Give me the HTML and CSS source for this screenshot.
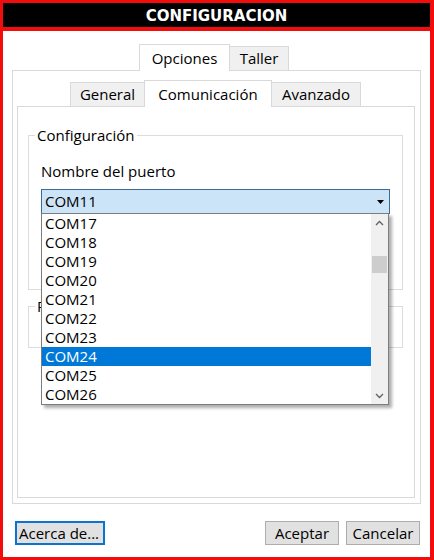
FILE: index.html
```html
<!DOCTYPE html>
<html lang="es">
<head>
<meta charset="utf-8">
<title>CONFIGURACION</title>
<link rel="stylesheet" href="styles.css">
</head>
<body>
<div class="window">
  <div class="titlebar">CONFIGURACION</div>
  <div class="client">
    <div class="strip outer-strip">
      <div class="tab sel w-opciones">Opciones</div>
      <div class="tab w-taller">Taller</div>
    </div>
    <div class="pane outer-pane">
      <div class="strip inner-strip">
        <div class="tab w-general">General</div>
        <div class="tab sel w-comunicacion">Comunicación</div>
        <div class="tab w-avanzado">Avanzado</div>
      </div>
      <div class="pane inner-pane">
        <div class="group group-config">
          <span class="legend">Configuración</span>
          <div class="label">Nombre del puerto</div>
          <div class="combo-wrap">
            <div class="combo">
              <span class="combo-value">COM11</span>
              <svg class="combo-arrow" width="7" height="4" viewBox="0 0 7 4"><path d="M0 0H7L3.5 4Z" fill="#000"/></svg>
            </div>
            <div class="droplist">
              <div class="items">
                <div class="item">COM17</div>
                <div class="item">COM18</div>
                <div class="item">COM19</div>
                <div class="item">COM20</div>
                <div class="item">COM21</div>
                <div class="item">COM22</div>
                <div class="item">COM23</div>
                <div class="item selected">COM24</div>
                <div class="item">COM25</div>
                <div class="item">COM26</div>
              </div>
              <div class="scrollbar">
                <div class="sb-arrow">
                  <svg width="9" height="6" viewBox="0 0 9 6"><path d="M1 5L4.5 1.5L8 5" fill="none" stroke="#606060" stroke-width="1.3"/></svg>
                </div>
                <div class="sb-track">
                  <div class="sb-thumb"></div>
                </div>
                <div class="sb-arrow">
                  <svg width="9" height="6" viewBox="0 0 9 6"><path d="M1 1L4.5 4.5L8 1" fill="none" stroke="#606060" stroke-width="1.3"/></svg>
                </div>
              </div>
            </div>
          </div>
        </div>
        <div class="group group-second">
          <span class="legend">Parámetros</span>
        </div>
      </div>
    </div>
    <div class="buttons">
      <button class="btn btn-focus w-acerca">Acerca de...</button>
      <div class="spacer"></div>
      <button class="btn w-btn">Aceptar</button>
      <button class="btn w-btn">Cancelar</button>
    </div>
  </div>
</div>
</body>
</html>
```
FILE: styles.css
```css
* { box-sizing: border-box; }
html, body { margin: 0; padding: 0; }
body {
  width: 434px;
  height: 560px;
  overflow: hidden;
  background: #f20c0c;
  font-family: "Open Sans", "Noto Sans", sans-serif;
  font-size: 15px;
  line-height: 20px;
  color: #000;
}
.window {
  display: flex;
  flex-direction: column;
  height: 560px;
  padding: 3px 4px 3px 3px;
}
.titlebar {
  height: 24px;
  flex: none;
  background: #000;
  color: #fff;
  font-family: "DejaVu Sans", sans-serif;
  font-weight: bold;
  font-size: 15px;
  line-height: 22px;
  padding-top: 2px;
  text-align: center;
  margin-bottom: 4px;
}
.client {
  flex: 1;
  background: #fff;
  display: flex;
  flex-direction: column;
  padding: 13px 9px 0;
}
.strip {
  display: flex;
  align-items: flex-end;
  height: 26px;
  flex: none;
}
.outer-strip { padding-left: 127px; }
.inner-strip { padding-left: 53px; }
.tab {
  height: 24px;
  border: 1px solid #d9d9d9;
  border-bottom: none;
  background: #f0f0f0;
  text-align: center;
  line-height: 20px;
  padding-top: 1px;
  white-space: nowrap;
}
.tab.sel {
  height: 27px;
  margin-bottom: -1px;
  background: #fff;
  position: relative;
  z-index: 1;
  padding-top: 3px;
}
.w-opciones { width: 91px; }
.w-taller { width: 60px; margin-left: -1px; }
.w-general { width: 75px; margin-right: -1px; }
.w-comunicacion { width: 128px; }
.w-avanzado { width: 90px; margin-left: -1px; }
.pane {
  border: 1px solid #d9d9d9;
  background: #fff;
}
.outer-pane {
  height: 434px;
  flex: none;
  display: flex;
  flex-direction: column;
  padding: 9px 5px 5px 4px;
}
.inner-pane {
  flex: 1;
  padding: 0 11px 0 10px;
  display: flex;
  flex-direction: column;
}
.group {
  border: 1px solid #dcdcdc;
  flex: none;
}
.group-config {
  margin-top: 28px;
  height: 155px;
}
.group-second {
  margin-top: 16px;
  height: 42px;
}
.legend {
  display: block;
  width: max-content;
  margin: -11px 0 0 6px;
  padding: 0 2px;
  background: #fff;
  line-height: 20px;
}
.label {
  margin: 16px 0 0 12px;
}
.combo-wrap {
  position: relative;
  margin: 8px 12px 0;
  height: 25px;
  z-index: 5;
}
.combo {
  height: 25px;
  border: 1px solid #3c6a98;
  background: #cce4f7;
  display: flex;
  align-items: center;
  justify-content: space-between;
  padding: 0 5px 0 3px;
  line-height: 23px;
}
.combo-arrow { display: block; margin-top: 1px; }
.droplist {
  position: absolute;
  top: 24px;
  left: 0;
  width: 348px;
  height: 192px;
  border: 1px solid #7d7d7d;
  background: #fff;
  display: flex;
  box-shadow: 3px 3px 3px rgba(0, 0, 0, 0.32);
}
.items { flex: 1; }
.item {
  height: 19px;
  line-height: 19px;
  padding-left: 3px;
}
.item.selected {
  background: #0078d7;
  color: #fff;
}
.scrollbar {
  width: 17px;
  background: #f0f0f0;
  display: flex;
  flex-direction: column;
}
.sb-arrow {
  height: 17px;
  display: flex;
  align-items: center;
  justify-content: center;
}
.sb-track { flex: 1; padding: 25px 1px 0; }
.sb-thumb {
  height: 17px;
  background: #cdcdcd;
}
.buttons {
  display: flex;
  margin-top: 17px;
  height: 24px;
  flex: none;
  gap: 7px;
  padding: 0 1px 0 3px;
}
.spacer { flex: 1; }
.btn {
  height: 24px;
  border: 1px solid #adadad;
  background: #e1e1e1;
  font-family: "Open Sans", "Noto Sans", sans-serif;
  font-size: 15px;
  line-height: 20px;
  padding: 0;
  color: #000;
  text-align: center;
}
.btn-focus {
  border: 2px solid #0a74d0;
  text-align: left;
  padding-left: 2px;
}
.w-acerca { width: 90px; }
.w-btn { width: 74px; }
```
